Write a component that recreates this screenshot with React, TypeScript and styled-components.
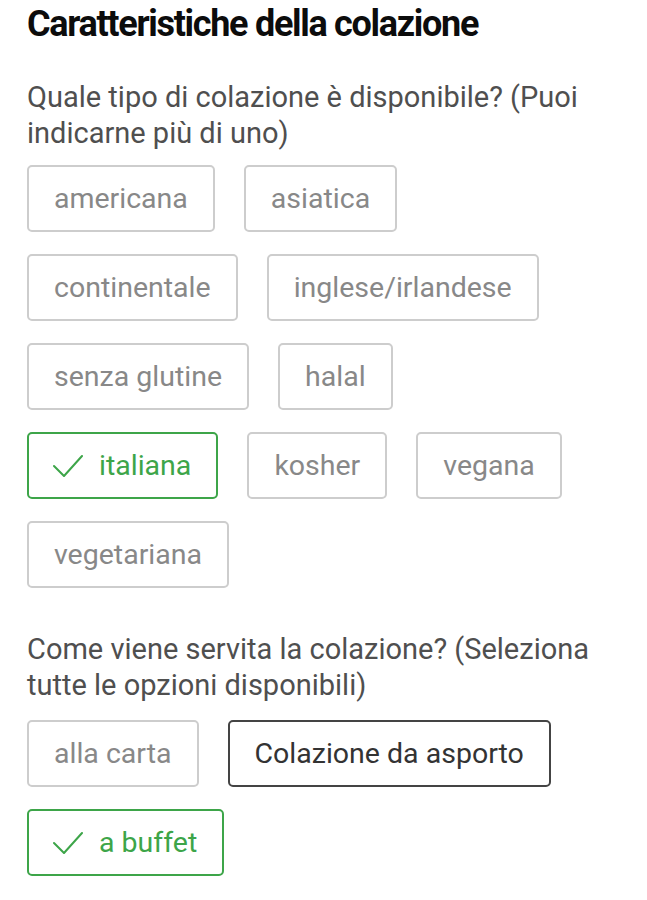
import React from 'react';
import styled, { createGlobalStyle } from 'styled-components';

const GlobalStyle = createGlobalStyle`
  body {
    margin: 0;
    background: #fff;
    font-family: Roboto, "Liberation Sans", sans-serif;
  }
`;

const Page = styled.div`
  padding: 2px 27px 24px;
`;

const Title = styled.h1`
  margin: 0;
  font-size: 36px;
  line-height: 44px;
  font-weight: 700;
  letter-spacing: -1.3px;
  color: #0c0c0c;
`;

const Question = styled.p`
  margin: 0 0 14px;
  font-size: 29px;
  line-height: 36px;
  color: #4f4f4f;
`;

const Section = styled.section`
  margin-top: 33px;

  & + & {
    margin-top: 43px;
  }

  & + & ${Question} {
    margin-bottom: 17px;
  }
`;

const ChipList = styled.div`
  display: flex;
  flex-wrap: wrap;
  gap: 22px 29px;
  max-width: 565px;
`;

type Variant = 'idle' | 'selected' | 'focused';

const colors: Record<Variant, { border: string; text: string }> = {
  idle: { border: '#cdcdcd', text: '#888' },
  selected: { border: '#3da549', text: '#3da549' },
  focused: { border: '#444', text: '#333' },
};

const Chip = styled.button<{ $variant: Variant }>`
  display: inline-flex;
  align-items: center;
  gap: 16px;
  height: 67px;
  padding: 0 ${p => (p.$variant === 'selected' ? '25px 0 24px' : '25px')};
  border: 2px solid ${p => colors[p.$variant].border};
  border-radius: 5px;
  background: #fff;
  font-family: inherit;
  font-size: 28.5px;
  color: ${p => colors[p.$variant].text};
  cursor: pointer;
`;

const Check = () => (
  <svg width="30" height="22" viewBox="0 0 30 22" fill="none">
    <path d="M1 11 L11 21 L29 1" stroke="currentColor" strokeWidth="2" strokeLinecap="round" strokeLinejoin="round" />
  </svg>
);

type Option = { label: string; variant?: Variant };

const types: Option[] = [
  { label: 'americana' },
  { label: 'asiatica' },
  { label: 'continentale' },
  { label: 'inglese/irlandese' },
  { label: 'senza glutine' },
  { label: 'halal' },
  { label: 'italiana', variant: 'selected' },
  { label: 'kosher' },
  { label: 'vegana' },
  { label: 'vegetariana' },
];

const service: Option[] = [
  { label: 'alla carta' },
  { label: 'Colazione da asporto', variant: 'focused' },
  { label: 'a buffet', variant: 'selected' },
];

const Chips = ({ options }: { options: Option[] }) => (
  <ChipList>
    {options.map(o => {
      const v = o.variant ?? 'idle';
      return (
        <Chip key={o.label} $variant={v}>
          {v === 'selected' && <Check />}
          {o.label}
        </Chip>
      );
    })}
  </ChipList>
);

export default function App() {
  return (
    <>
      <GlobalStyle />
      <Page>
        <Title>Caratteristiche della colazione</Title>
        <Section>
          <Question>Quale tipo di colazione è disponibile? (Puoi indicarne più di uno)</Question>
          <Chips options={types} />
        </Section>
        <Section>
          <Question>Come viene servita la colazione? (Seleziona tutte le opzioni disponibili)</Question>
          <Chips options={service} />
        </Section>
      </Page>
    </>
  );
}
